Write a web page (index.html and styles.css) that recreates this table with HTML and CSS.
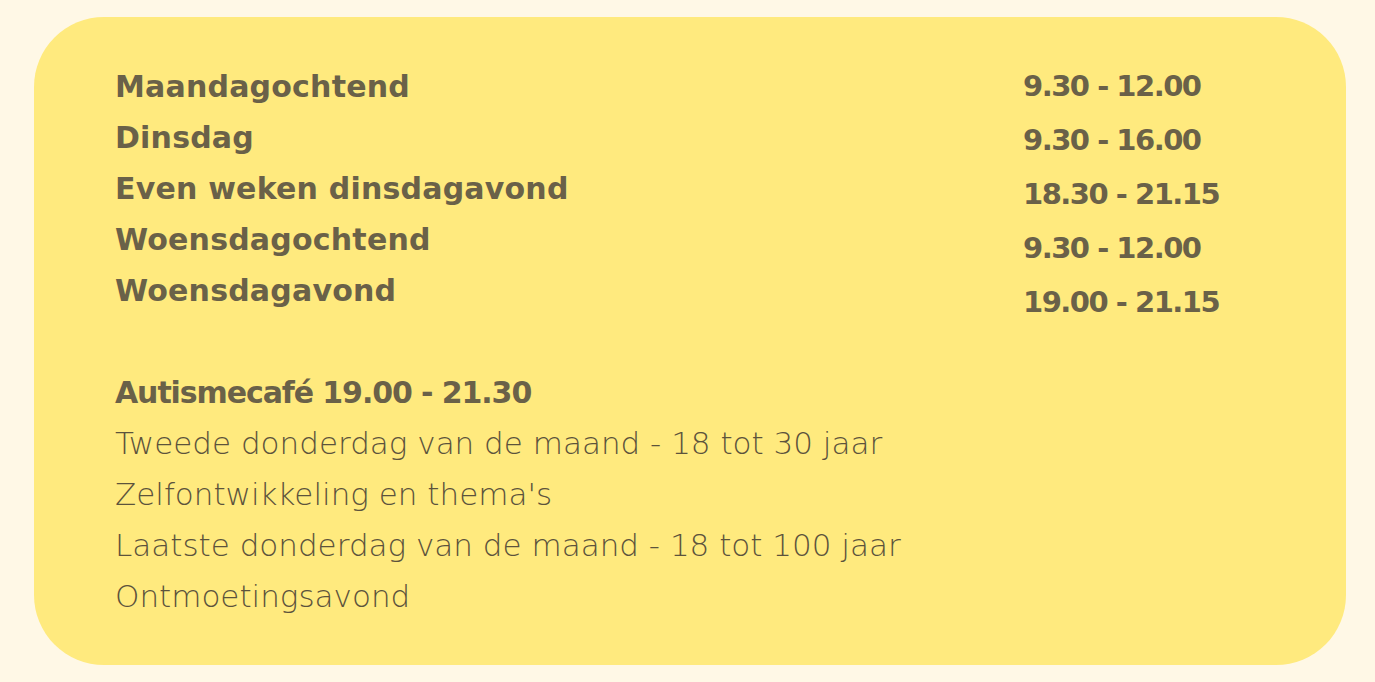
FILE: index.html
```html
<!DOCTYPE html>
<html lang="nl">
<head>
<meta charset="utf-8">
<title>Openingstijden</title>
<link rel="stylesheet" href="styles.css">
</head>
<body>
<main class="page">
  <section class="card">
    <div class="schedule">
      <ul class="days">
        <li>Maandagochtend</li>
        <li>Dinsdag</li>
        <li>Even weken dinsdagavond</li>
        <li>Woensdagochtend</li>
        <li>Woensdagavond</li>
      </ul>
      <ul class="times">
        <li>9.30 - 12.00</li>
        <li>9.30 - 16.00</li>
        <li>18.30 - 21.15</li>
        <li>9.30 - 12.00</li>
        <li>19.00 - 21.15</li>
      </ul>
    </div>
    <div class="cafe">
      <p class="cafe-title">Autismecafé 19.00 - 21.30</p>
      <p>Tweede donderdag van de maand - 18 tot 30 jaar</p>
      <p>Zelfontwikkeling en thema's</p>
      <p>Laatste donderdag van de maand - 18 tot 100 jaar</p>
      <p>Ontmoetingsavond</p>
    </div>
  </section>
</main>
</body>
</html>
```
FILE: styles.css
```css
html, body {
  margin: 0;
  padding: 0;
  background: #fff8e6;
}
body {
  font-family: "DejaVu Sans", "Open Sans", sans-serif;
  color: #6a6148;
}
.page {
  padding: 17px 29px 17px 34px;
}
.card {
  background: #ffea7e;
  border-radius: 70px;
  padding: 42px 82px 43px 81px;
  height: 648px;
  box-sizing: border-box;
}
.schedule {
  display: grid;
  grid-template-columns: 1fr 241px;
}
.days, .times {
  list-style: none;
  margin: 0;
  padding: 0;
  font-weight: 700;
  font-size: 30px;
}
.days {
  padding-top: 2px;
  letter-spacing: 0.2px;
}
.days li {
  line-height: 51px;
}
.times {
  font-size: 29px;
  letter-spacing: -1.5px;
}
.times li {
  line-height: 54px;
}
.cafe {
  margin-top: 38px;
}
.cafe p {
  margin: 0;
  line-height: 51px;
  font-family: "DejaVu Sans", sans-serif;
  font-weight: 200;
  font-size: 31px;
  color: #5c533c;
}
.cafe .cafe-title {
  font-weight: 700;
  font-size: 30px;
  letter-spacing: -1.1px;
  color: #6a6148;
}
```
